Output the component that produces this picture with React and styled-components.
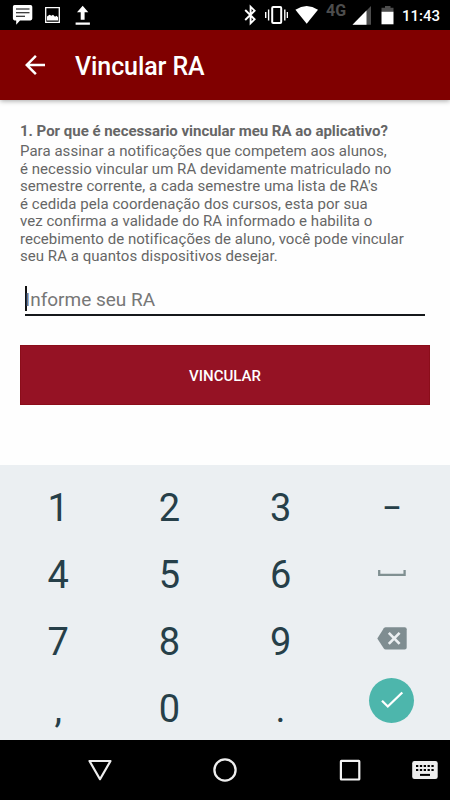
import React from 'react';
import styled, { createGlobalStyle } from 'styled-components';

const GlobalStyle = createGlobalStyle`
  * {
    box-sizing: border-box;
  }
  body {
    margin: 0;
    background: #fff;
    font-family: Roboto, "Noto Sans", sans-serif;
    -webkit-font-smoothing: antialiased;
  }
`;

const Screen = styled.div`
  display: flex;
  flex-direction: column;
  width: 450px;
  height: 800px;
  background: #fefefe;
  overflow: hidden;
`;

const StatusBar = styled.div`
  display: flex;
  flex-shrink: 0;
  height: 30px;
  padding: 0 10px 0 12px;
  background: #000;
`;

const StatusIcon = styled.svg`
  display: block;
  flex-shrink: 0;
  height: 30px;
  margin-left: ${({ $gap }) => $gap || 0}px;
`;

const Network = styled.span`
  width: 22px;
  margin-left: 7px;
  margin-right: 1px;
  font-size: 16px;
  font-weight: 700;
  line-height: 22px;
  color: #4d4d4d;
`;

const Clock = styled.span`
  margin-left: auto;
  font-size: 15px;
  font-weight: 500;
  line-height: 32px;
  color: #fff;
`;

const Toolbar = styled.header`
  display: flex;
  align-items: center;
  flex-shrink: 0;
  height: 70px;
  padding-left: 20px;
  background: #800000;
  box-shadow: 0 1px 5px rgba(0, 0, 0, 0.35);
  h1 {
    margin: 2px 0 0 25px;
    font-size: 25px;
    font-weight: 500;
    letter-spacing: -0.1px;
    color: #fff;
  }
`;

const Content = styled.main`
  flex: 1;
  padding: 22px 20px 0;
`;

const Question = styled.h2`
  margin: 0 0 3px;
  font-size: 15px;
  font-weight: 700;
  line-height: 18px;
  letter-spacing: -0.02px;
  color: #666;
`;

const Answer = styled.p`
  margin: 0;
  font-size: 15px;
  line-height: 17.5px;
  letter-spacing: 0.04px;
  white-space: pre-line;
  color: #666;
`;

const Field = styled.div`
  display: flex;
  align-items: center;
  height: 31px;
  margin: 19.5px 5px 0;
  border-bottom: 2px solid #15181b;
  font-size: 19px;
  color: #777;
`;

const Caret = styled.i`
  width: 2px;
  height: 25px;
  margin: 0 -2px 3px 0;
  background: #111;
`;

const Submit = styled.button`
  display: block;
  width: 100%;
  height: 60px;
  margin-top: 28.5px;
  padding: 2px 0 0;
  border: 1px solid #8b0d1a;
  background: #951224;
  font-family: inherit;
  font-size: 15px;
  font-weight: 500;
  color: #fff;
`;

const Keypad = styled.div`
  display: grid;
  grid-template-columns: repeat(4, 111.25px);
  grid-auto-rows: 67px;
  flex-shrink: 0;
  height: 275px;
  padding: 8px 2.5px 0;
  background: #ebeff2;
  overflow: hidden;
`;

const Key = styled.div`
  display: flex;
  align-items: center;
  justify-content: center;
  padding-top: ${({ $icon }) => ($icon ? 0 : 2)}px;
  padding-bottom: ${({ $lift }) => $lift || 0}px;
  font-size: ${({ $size }) => $size || 38}px;
  font-weight: ${({ $size }) => ($size ? 500 : 400)};
  color: #263f49;
`;

const Enter = styled.div`
  display: flex;
  align-items: center;
  justify-content: center;
  width: 45px;
  height: 45px;
  border-radius: 50%;
  background: #4db6ac;
`;

const NavBar = styled.nav`
  display: flex;
  align-items: center;
  flex-shrink: 0;
  height: 60px;
  padding-left: 86px;
  background: #000;
`;

const NavIcon = styled.svg`
  flex-shrink: 0;
  width: 28px;
  height: 28px;
  margin-right: ${({ $after }) => $after || 0}px;
`;

const answer = `Para assinar a notificações que competem aos alunos,
é necessio vincular um RA devidamente matriculado no
semestre corrente, a cada semestre uma lista de RA's
é cedida pela coordenação dos cursos, esta por sua
vez confirma a validade do RA informado e habilita o
recebimento de notificações de aluno, você pode vincular
seu RA a quantos dispositivos desejar.`;

const SpaceIcon = () => (
  <svg width="28" height="7" viewBox="0 0 28 7">
    <path d="M1.2 0v4.8h25.4V0" fill="none" stroke="#809092" strokeWidth="2.3" />
  </svg>
);

const DeleteIcon = () => (
  <svg width="30" height="23" viewBox="0 0 30 23">
    <path d="M8.7.2h19a2 2 0 0 1 2 2v18.4a2 2 0 0 1-2 2h-19q-1.2 0-1.9-1L.3 11.4 6.8 1.2Q7.5.2 8.7.2z" fill="#7f8d91" />
    <path d="M11.8 5.9l10.8 11M22.6 5.9l-10.8 11" stroke="#ebeff2" strokeWidth="2.7" />
  </svg>
);

const CheckIcon = () => (
  <svg width="24" height="18" viewBox="0 0 24 18">
    <path d="M2 9.8l5.8 5.7L22.3 1.5" fill="none" stroke="#fff" strokeWidth="2.3" />
  </svg>
);

const keys = [
  { id: '1', label: '1' },
  { id: '2', label: '2' },
  { id: '3', label: '3' },
  { id: 'dash', label: '–', size: 29 },
  { id: '4', label: '4' },
  { id: '5', label: '5' },
  { id: '6', label: '6' },
  { id: 'space', label: <SpaceIcon />, icon: true, lift: 1 },
  { id: '7', label: '7' },
  { id: '8', label: '8' },
  { id: '9', label: '9' },
  { id: 'delete', label: <DeleteIcon />, icon: true, lift: 4 },
  { id: 'comma', label: ',' },
  { id: '0', label: '0' },
  { id: 'dot', label: '.' },
  { id: 'enter', label: <Enter><CheckIcon /></Enter>, icon: true, lift: 15 },
];

const Status = () => (
  <StatusBar>
    <StatusIcon width="21" viewBox="12 0 21 30" fill="#fff">
      <path d="M14.5 5h16q1.8 0 1.8 1.8v11.8q0 1.8-1.8 1.8H20l-3.8 4.3v-4.3h-1.7q-1.6 0-1.6-1.8V6.8Q12.9 5 14.5 5z" />
      <path d="M16 9h13.5M16 12.7h13.5M16 16.2h9" stroke="#000" strokeWidth="1.1" />
    </StatusIcon>
    <StatusIcon width="17" $gap={11} viewBox="44 0 17 30">
      <path d="M45.7 7.7h13.6v14.6H45.7z" fill="none" stroke="#fff" strokeWidth="1.3" />
      <path d="M47 20.5v-4l2.5-1.7 2 1 1.5-1 2 2 1.5-1 1.5 1.5v3.2z" fill="#fff" />
    </StatusIcon>
    <StatusIcon width="17" $gap={13} viewBox="74 0 17 30" fill="#fff">
      <path d="M82.7 5.8l5.6 6.4h-3.7v7.5h-3.9v-7.5H77zM75.6 22.5h14.3v2.3H75.6z" />
    </StatusIcon>
    <StatusIcon width="14" $gap={152} viewBox="243 0 14 30">
      <path d="M245.2 10l9.4 9.3-4 4V6.7l4 4-9.4 9.3" fill="none" stroke="#fff" strokeWidth="1.9" />
    </StatusIcon>
    <StatusIcon width="24" $gap={7} viewBox="264 0 24 30" fill="none" stroke="#fff">
      <rect x="272.2" y="7.1" width="9" height="15.8" rx="1" strokeWidth="2" />
      <path d="M265.7 12v6M268.6 9.5v11M284.8 9.5v11M287.4 12v6" strokeWidth="1.4" />
    </StatusIcon>
    <StatusIcon width="24" $gap={7} viewBox="295 0 24 30" fill="#fff">
      <path d="M295.4 9.7Q306.7 2.3 318 9.7L306.7 23.7z" />
    </StatusIcon>
    <Network>4G</Network>
    <StatusIcon width="20" $gap={3} viewBox="352 0 20 30">
      <path d="M371 6v18.7h-18.5z" fill="#4d4d4d" />
      <path d="M366.5 10.5v14.2h-14z" fill="#fff" />
    </StatusIcon>
    <StatusIcon width="13" $gap={9} viewBox="381 0 13 30">
      <path d="M385 6h5.5v1.7h3v4h-12v-4h3.5z" fill="#4d4d4d" />
      <path d="M381.5 11.7h12V24.3h-12z" fill="#fff" />
    </StatusIcon>
    <Clock>11:43</Clock>
  </StatusBar>
);

const App = () => (
  <>
    <GlobalStyle />
    <Screen>
      <Status />
      <Toolbar>
        <svg width="30" height="30" viewBox="0 0 24 24" fill="#fff">
          <path d="M20 11H7.83l5.59-5.59L12 4l-8 8 8 8 1.41-1.41L7.83 13H20v-2z" />
        </svg>
        <h1>Vincular RA</h1>
      </Toolbar>
      <Content>
        <Question>1. Por que é necessario vincular meu RA ao aplicativo?</Question>
        <Answer>{answer}</Answer>
        <Field>
          <Caret />
          Informe seu RA
        </Field>
        <Submit>VINCULAR</Submit>
      </Content>
      <Keypad>
        {keys.map(({ id, label, icon, lift, size }) => (
          <Key key={id} $icon={icon} $lift={lift} $size={size}>{label}</Key>
        ))}
      </Keypad>
      <NavBar>
        <NavIcon $after={97} viewBox="0 0 28 28">
          <path d="M3.5 5h21L14 23.2z" fill="none" stroke="#eee" strokeWidth="2.2" strokeLinejoin="round" />
        </NavIcon>
        <NavIcon $after={97} viewBox="0 0 28 28">
          <circle cx="14" cy="14" r="10.6" fill="none" stroke="#eee" strokeWidth="2.3" />
        </NavIcon>
        <NavIcon $after={47} viewBox="0 0 28 28">
          <rect x="4.9" y="4.9" width="18.4" height="18.6" rx="0.5" fill="none" stroke="#f4f4f4" strokeWidth="2.2" />
        </NavIcon>
        <NavIcon viewBox="0 0 28 28">
          <rect x="1.2" y="5" width="25.5" height="18" rx="2.3" fill="#eee" />
          <path d="M5 10h18M5 14h18" stroke="#000" strokeWidth="2.2" strokeDasharray="2.3 1.55" />
          <path d="M9 18.9h10" stroke="#000" strokeWidth="2" />
        </NavIcon>
      </NavBar>
    </Screen>
  </>
);

export default App;
